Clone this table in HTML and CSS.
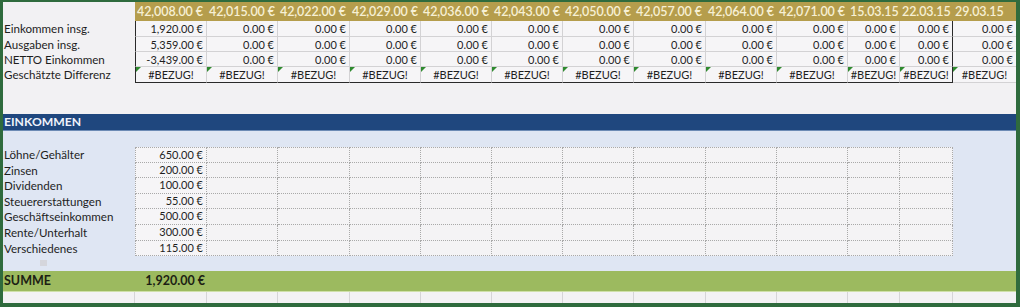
FILE: index.html
```html
<!DOCTYPE html>
<html lang="de">
<head>
<meta charset="utf-8">
<title>Budget</title>
<link rel="stylesheet" href="styles.css">
</head>
<body>
<div class="sheet">
  <div class="summary cols">
    <div class="corner"></div>
    <div class="hd">42,008.00 €</div>
    <div class="hd">42,015.00 €</div>
    <div class="hd">42,022.00 €</div>
    <div class="hd">42,029.00 €</div>
    <div class="hd">42,036.00 €</div>
    <div class="hd">42,043.00 €</div>
    <div class="hd">42,050.00 €</div>
    <div class="hd">42,057.00 €</div>
    <div class="hd">42,064.00 €</div>
    <div class="hd">42,071.00 €</div>
    <div class="hd">15.03.15</div>
    <div class="hd">22.03.15</div>
    <div class="hd">29.03.15</div>

    <div class="lbl r1">Einkommen insg.</div>
    <div class="v r1 first">1,920.00 €</div>
    <div class="v r1">0.00 €</div><div class="v r1">0.00 €</div><div class="v r1">0.00 €</div><div class="v r1">0.00 €</div><div class="v r1">0.00 €</div><div class="v r1">0.00 €</div><div class="v r1">0.00 €</div><div class="v r1">0.00 €</div><div class="v r1">0.00 €</div><div class="v r1">0.00 €</div>
    <div class="v r1 edge">0.00 €</div>
    <div class="v r1 out">0.00 €</div>

    <div class="lbl">Ausgaben insg.</div>
    <div class="v first">5,359.00 €</div>
    <div class="v">0.00 €</div><div class="v">0.00 €</div><div class="v">0.00 €</div><div class="v">0.00 €</div><div class="v">0.00 €</div><div class="v">0.00 €</div><div class="v">0.00 €</div><div class="v">0.00 €</div><div class="v">0.00 €</div><div class="v">0.00 €</div>
    <div class="v edge">0.00 €</div>
    <div class="v out">0.00 €</div>

    <div class="lbl">NETTO Einkommen</div>
    <div class="v first">-3,439.00 €</div>
    <div class="v">0.00 €</div><div class="v">0.00 €</div><div class="v">0.00 €</div><div class="v">0.00 €</div><div class="v">0.00 €</div><div class="v">0.00 €</div><div class="v">0.00 €</div><div class="v">0.00 €</div><div class="v">0.00 €</div><div class="v">0.00 €</div>
    <div class="v edge">0.00 €</div>
    <div class="v out">0.00 €</div>

    <div class="lbl r4">Geschätzte Differenz</div>
    <div class="v err r4 first">#BEZUG!</div>
    <div class="v err r4">#BEZUG!</div><div class="v err r4">#BEZUG!</div><div class="v err r4">#BEZUG!</div><div class="v err r4">#BEZUG!</div><div class="v err r4">#BEZUG!</div><div class="v err r4">#BEZUG!</div><div class="v err r4">#BEZUG!</div><div class="v err r4">#BEZUG!</div><div class="v err r4">#BEZUG!</div><div class="v err r4">#BEZUG!</div>
    <div class="v err r4 edge">#BEZUG!</div>
    <div class="v err r4 out">#BEZUG!</div>
  </div>

  <div class="gap"></div>

  <div class="band">EINKOMMEN</div>

  <div class="income">
    <div class="itable cols">
      <div class="ilbl">Löhne/Gehälter</div><div class="ic iv top">650.00 €</div><div class="ic top"></div><div class="ic top"></div><div class="ic top"></div><div class="ic top"></div><div class="ic top"></div><div class="ic top"></div><div class="ic top"></div><div class="ic top"></div><div class="ic top"></div><div class="ic top"></div><div class="ic top"></div><div class="blank"></div>
      <div class="ilbl">Zinsen</div><div class="ic iv">200.00 €</div><div class="ic"></div><div class="ic"></div><div class="ic"></div><div class="ic"></div><div class="ic"></div><div class="ic"></div><div class="ic"></div><div class="ic"></div><div class="ic"></div><div class="ic"></div><div class="ic"></div><div class="blank"></div>
      <div class="ilbl">Dividenden</div><div class="ic iv">100.00 €</div><div class="ic"></div><div class="ic"></div><div class="ic"></div><div class="ic"></div><div class="ic"></div><div class="ic"></div><div class="ic"></div><div class="ic"></div><div class="ic"></div><div class="ic"></div><div class="ic"></div><div class="blank"></div>
      <div class="ilbl">Steuererstattungen</div><div class="ic iv">55.00 €</div><div class="ic"></div><div class="ic"></div><div class="ic"></div><div class="ic"></div><div class="ic"></div><div class="ic"></div><div class="ic"></div><div class="ic"></div><div class="ic"></div><div class="ic"></div><div class="ic"></div><div class="blank"></div>
      <div class="ilbl">Geschäftseinkommen</div><div class="ic iv">500.00 €</div><div class="ic"></div><div class="ic"></div><div class="ic"></div><div class="ic"></div><div class="ic"></div><div class="ic"></div><div class="ic"></div><div class="ic"></div><div class="ic"></div><div class="ic"></div><div class="ic"></div><div class="blank"></div>
      <div class="ilbl">Rente/Unterhalt</div><div class="ic iv">300.00 €</div><div class="ic"></div><div class="ic"></div><div class="ic"></div><div class="ic"></div><div class="ic"></div><div class="ic"></div><div class="ic"></div><div class="ic"></div><div class="ic"></div><div class="ic"></div><div class="ic"></div><div class="blank"></div>
      <div class="ilbl">Verschiedenes</div><div class="ic iv">115.00 €</div><div class="ic"></div><div class="ic"></div><div class="ic"></div><div class="ic"></div><div class="ic"></div><div class="ic"></div><div class="ic"></div><div class="ic"></div><div class="ic"></div><div class="ic"></div><div class="ic"></div><div class="blank"></div>
    </div>
    <div class="foot"><span class="chk"></span></div>
  </div>

  <div class="summe cols">
    <div class="slbl">SUMME</div>
    <div class="sval">1,920.00 €</div>
  </div>

  <div class="tail cols">
    <div class="t"></div><div class="t"></div><div class="t"></div><div class="t"></div><div class="t"></div><div class="t"></div><div class="t"></div><div class="t"></div><div class="t"></div><div class="t"></div><div class="t"></div><div class="t"></div><div class="t"></div><div class="t last"></div>
  </div>
</div>
</body>
</html>
```

FILE: styles.css
```css
html, body {
  margin: 0;
  padding: 0;
}
body {
  width: 1020px;
  height: 307px;
  background: #2f6b3d;
  padding: 2px 4px 4px 3px;
  box-sizing: border-box;
  font-family: Lato, "Open Sans", sans-serif;
  font-size: 11px;
  color: #1e1e1e;
  overflow: hidden;
}
.sheet {
  width: 1013px;
  height: 301px;
  background: #f2f1f3;
  display: flex;
  flex-direction: column;
}
.sheet > * {
  flex-shrink: 0;
}
.cols {
  display: grid;
  grid-template-columns: 132px 72px 71px 72px 71px 71px 71px 71px 72px 71px 71px 52px 53px 63px;
}

/* summary */
.summary {
  grid-template-rows: 19px 16px 15px 15px 16px;
}
.corner {
  background: #f2f1f3;
}
.hd {
  background: #b59d4c;
  color: #f7f0d4;
  font-size: 12.5px;
  font-weight: 600;
  line-height: 19px;
  padding-left: 2px;
  white-space: nowrap;
  letter-spacing: -0.1px;
}
.lbl {
  padding-left: 1px;
  font-size: 11.6px;
  line-height: 15px;
  white-space: nowrap;
}
.v {
  background: #f6f5f7;
  border-right: 1px solid #d3d2d4;
  border-bottom: 1px solid #d3d2d4;
  text-align: right;
  padding-right: 3px;
  line-height: 15px;
  box-sizing: border-box;
  white-space: nowrap;
  position: relative;
}
.v.first {
  border-left: 1px solid #2a2a2a;
}
.v.edge {
  border-right: 1px solid #2a2a2a;
}
.v.out {
  border-right: none;
}
.v.r4 {
  border-bottom: 1px solid #2a2a2a;
}
.v.r4.out {
  border-bottom: 1px solid #d3d2d4;
}
.v.err {
  text-align: center;
  padding-right: 0;
}
.v.err::before {
  content: "";
  position: absolute;
  left: 0;
  top: 0;
  width: 0;
  height: 0;
  border-top: 5px solid #2f8a2f;
  border-right: 5px solid transparent;
}

.gap {
  height: 31px;
}

/* band */
.band {
  height: 16px;
  background: #1f477e;
  border-bottom: 1px solid #6d8bb5;
  color: #eef2fa;
  font-weight: 700;
  font-size: 12.2px;
  line-height: 16px;
  padding-left: 1px;
}

/* income */
.income {
  background: #dfe6f3;
  padding-top: 16px;
  height: 140px;
  box-sizing: border-box;
  display: flex;
  flex-direction: column;
}
.itable {
  grid-auto-rows: 15.6px;
}
.ilbl {
  padding-left: 1px;
  font-size: 11.6px;
  line-height: 15px;
  white-space: nowrap;
}
.ic {
  background: #f4f3f5;
  border-right: 1px dotted #a9a9a9;
  border-bottom: 1px dotted #a9a9a9;
  box-sizing: border-box;
  line-height: 14px;
  text-align: right;
  padding-right: 3px;
}
.ic.iv {
  border-left: 1px dotted #a9a9a9;
  background: #f6f5f7;
}
.ic.top {
  border-top: 1px dotted #a9a9a9;
}
.blank {
  background: transparent;
}
.foot {
  height: 15px;
  padding-left: 37px;
  padding-top: 4px;
  box-sizing: border-box;
}
.chk {
  display: block;
  width: 7px;
  height: 6px;
  background: #d5d6dc;
}

/* summe */
.summe {
  height: 21px;
  box-sizing: border-box;
  background: #9cba5f;
  border-bottom: 1px solid #cfe0a9;
  font-weight: 700;
  font-size: 12.5px;
  line-height: 20px;
  color: #1c1f14;
}
.slbl {
  padding-left: 1px;
}
.sval {
  text-align: right;
  padding-right: 2px;
}

.tail {
  flex: 1 1 auto;
  background: #f3f2f4;
}
.t {
  border-right: 1px solid #d6d5d7;
}
.t.last {
  border-right: none;
}
```
